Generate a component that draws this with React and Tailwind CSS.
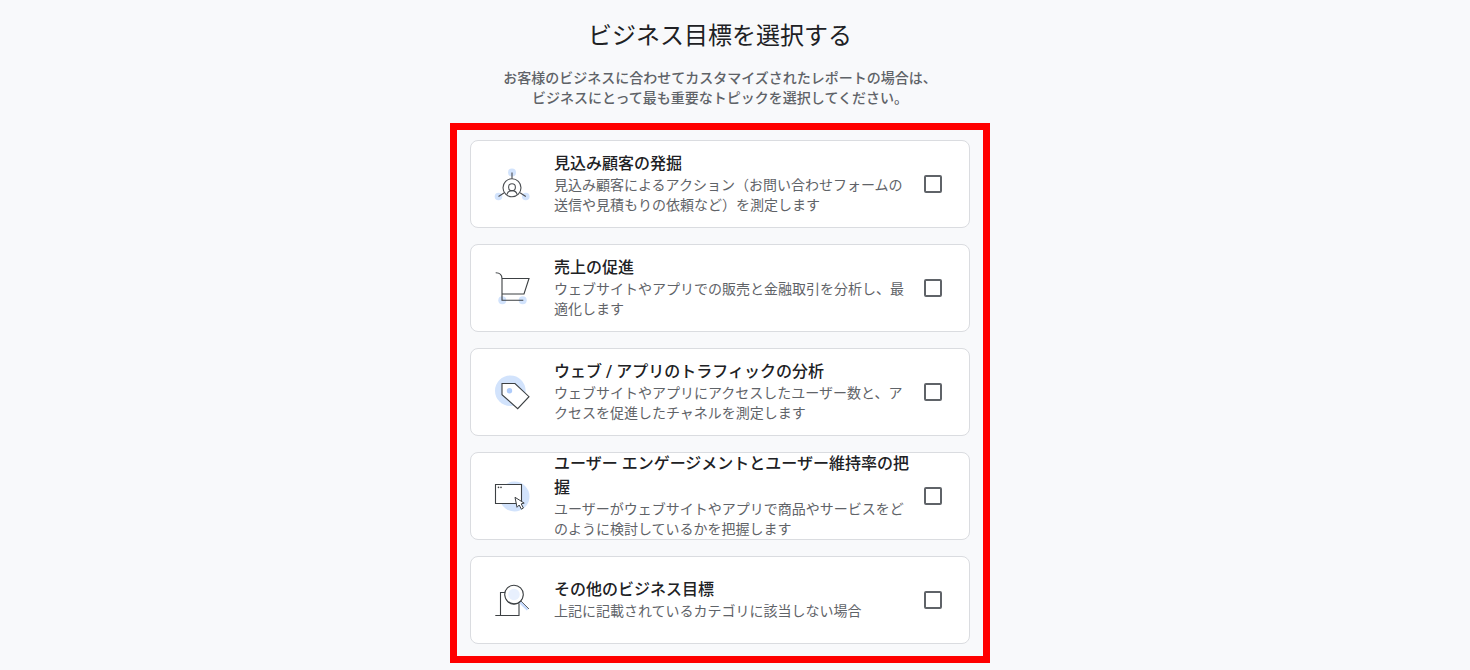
import React, { useState } from 'react';

const LeadsIcon = () => (
    <svg viewBox="0 0 36 36" className="w-9 h-9 shrink-0" fill="none" aria-hidden="true">
        <g fill="#d2e3fc">
            <circle cx="18" cy="6.5" r="4" />
            <circle cx="4.5" cy="30.5" r="3.8" />
            <circle cx="31.8" cy="30.5" r="3.8" />
        </g>
        <g stroke="#4a4d51" strokeWidth="1.1">
            <circle cx="18" cy="21.8" r="9" />
            <circle cx="18" cy="21.2" r="3.4" />
            <path d="M12.8 28.6c.6-2.4 2.6-4 5.2-4s4.6 1.6 5.2 4" />
            <path d="M18 6.5v6.3M4.5 30.5l5.8-3.7M31.8 30.5l-5.8-3.7" />
        </g>
    </svg>
);

const CartIcon = () => (
    <svg viewBox="0 0 36 36" className="w-9 h-9 shrink-0" fill="none" aria-hidden="true">
        <circle cx="8.3" cy="30.3" r="4" fill="#d2e3fc" />
        <circle cx="28.7" cy="30.3" r="4" fill="#d2e3fc" />
        <g stroke="#3c4043" strokeWidth="1.1">
            <path d="M1.7 2.7c4 0 6.3 2 6.3 6v21.6h21.3" />
            <path d="M8 8.5h27l-5 15.5H8" />
        </g>
    </svg>
);

const TagIcon = () => (
    <svg viewBox="0 0 36 36" className="w-9 h-9 shrink-0" fill="none" aria-hidden="true">
        <circle cx="16.3" cy="16.7" r="15.3" fill="#d2e3fc" />
        <path d="M8 9.5h13l14 13.2-11.3 12L8 20.7z" fill="#fff" stroke="#3c4043" strokeWidth="1.1" />
        <circle cx="15.5" cy="16.7" r="2.7" fill="#aecbfa" />
    </svg>
);

const BrowserIcon = () => (
    <svg viewBox="0 0 36 36" className="w-9 h-9 shrink-0" fill="none" aria-hidden="true">
        <circle cx="20.5" cy="18.5" r="15" fill="#d2e3fc" />
        <path d="M1.5 6.5h26v19h-26z" fill="#fff" stroke="#3c4043" strokeWidth="1.1" />
        <circle cx="4.5" cy="9.4" r=".8" fill="#3c4043" />
        <circle cx="7" cy="9.4" r=".8" fill="#3c4043" />
        <path
            d="M21 19.300l2 10 2.200-2.300 2.200 4.200 2-1.200-2.200-4.100 3-.8z"
            fill="#fff"
            stroke="#3c4043"
            strokeWidth="1"
        />
    </svg>
);

const SearchIcon = () => (
    <svg viewBox="0 0 36 36" className="w-9 h-9 shrink-0" fill="none" aria-hidden="true">
        <path d="M1.3 33.5h23.700V10.500H6.500v23" stroke="#3c4043" strokeWidth="1.1" />
        <path d="M26 20l7.700 7.700" stroke="#c6dafc" strokeWidth="2.600" />
        <path d="M26.700 18.700l8.300 8.300" stroke="#5f6368" strokeWidth="1" />
        <circle cx="20" cy="13.500" r="9.300" fill="#3c4043" />
        <circle cx="20" cy="12.500" r="9.300" fill="#fff" stroke="#3c4043" strokeWidth="1.1" />
        <circle cx="20" cy="12.500" r="5.700" fill="#e8f0fe" />
    </svg>
);

const objectives = [
    {
        id: 'leads',
        icon: LeadsIcon,
        title: '見込み顧客の発掘',
        description: '見込み顧客によるアクション（お問い合わせフォームの送信や見積もりの依頼など）を測定します'
    },
    {
        id: 'sales',
        icon: CartIcon,
        title: '売上の促進',
        description: 'ウェブサイトやアプリでの販売と金融取引を分析し、最適化します'
    },
    {
        id: 'traffic',
        icon: TagIcon,
        title: 'ウェブ / アプリのトラフィックの分析',
        description: 'ウェブサイトやアプリにアクセスしたユーザー数と、アクセスを促進したチャネルを測定します'
    },
    {
        id: 'engagement',
        icon: BrowserIcon,
        title: 'ユーザー エンゲージメントとユーザー維持率の把握',
        description: 'ユーザーがウェブサイトやアプリで商品やサービスをどのように検討しているかを把握します'
    },
    {
        id: 'other',
        icon: SearchIcon,
        title: 'その他のビジネス目標',
        description: '上記に記載されているカテゴリに該当しない場合'
    }
];

const App = () => {
    const [selected, setSelected] = useState([]);

    const toggle = (id) => {
        setSelected(prev => (prev.includes(id) ? prev.filter(item => item !== id) : [...prev, id]));
    };

    return (
        <main
            lang="ja"
            className="min-h-screen bg-[#f8f9fb] pt-5 pr-[46px] pb-[7px] pl-4 font-[Roboto,'Noto_Sans_CJK_JP',sans-serif] text-[#202124]"
        >
            {/* Heading */}
            <header className="text-center">
                <h1 className="text-2xl leading-8">ビジネス目標を選択する</h1>
                <p className="mt-4 text-sm leading-5 font-medium text-[#5f6368]">
                    お客様のビジネスに合わせてカスタマイズされたレポートの場合は、
                    <br />
                    ビジネスにとって最も重要なトピックを選択してください。
                </p>
            </header>

            {/* Objectives */}
            <section className="mx-auto mt-[15px] flex max-w-[540px] flex-col gap-4 border-[7px] border-[#ff0000] px-[13px] pt-[10px] pb-3">
                {objectives.map((objective) => {
                    const Icon = objective.icon;

                    return (
                        <label
                            key={objective.id}
                            htmlFor={objective.id}
                            className="flex h-22 cursor-pointer items-center rounded-lg border border-[#dadce0] bg-white pr-[27px] pl-[23px]"
                        >
                            <Icon />
                            <span className="mr-3 ml-6 min-w-0 flex-1">
                                <span className="block text-base leading-6 font-medium">{objective.title}</span>
                                <span className="-mt-px block pb-px text-sm leading-5 text-[#5f6368]">
                                    {objective.description}
                                </span>
                            </span>
                            <input
                                id={objective.id}
                                type="checkbox"
                                checked={selected.includes(objective.id)}
                                onChange={() => toggle(objective.id)}
                                className="h-[18px] w-[18px] shrink-0 cursor-pointer appearance-none rounded-[2px] border-2 border-[#5f6368] checked:border-[#1a73e8] checked:bg-[#1a73e8]"
                            />
                        </label>
                    );
                })}
            </section>
        </main>
    );
};

export default App;
